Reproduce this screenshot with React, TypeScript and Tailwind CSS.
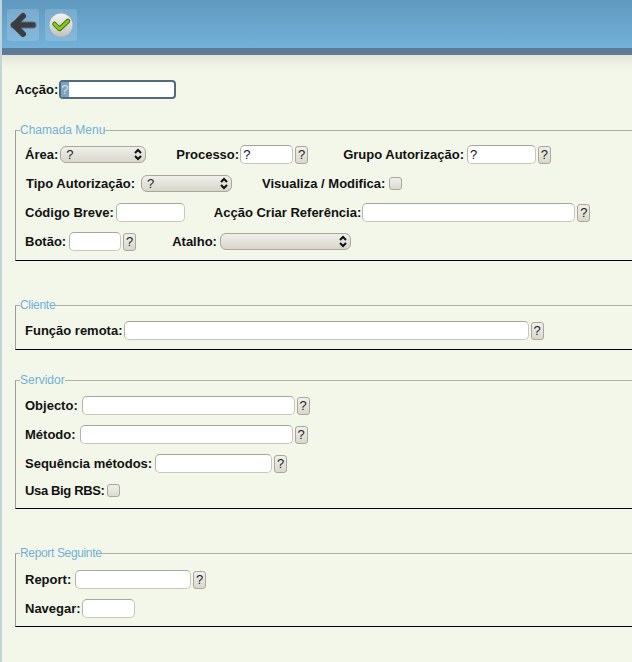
import React from "react";

const Label = ({ t, className = "mr-[2px]" }: { t: string; className?: string }) => (
  <span className={"font-bold text-[13px] text-[#111] whitespace-nowrap " + className}>{t}</span>
);
const Input = ({ w, v = "" }: { w: string; v?: string }) => (
  <div className={"h-[19px] bg-white rounded-[5px] border border-[#c9c8b8] border-t-[#a8a694] border-l-[#b5b3a2] text-[13px] leading-[17px] pl-[2px] text-[#111] " + w}>{v}</div>
);
const Help = () => (
  <div className="ml-[2px] w-[13px] h-[18px] rounded-[3px] border border-[#a9a89a] bg-gradient-to-b from-[#f0efea] to-[#d9d8cf] text-[13px] leading-[16px] text-center text-[#222]">?</div>
);
const Select = ({ w, v = "" }: { w: string; v?: string }) => (
  <div className={"h-[17px] rounded-[6px] border border-[#a9a89a] bg-gradient-to-b from-[#f0efe9] to-[#d8d7cd] flex items-center justify-between pl-[5px] pr-[2px] text-[13px] text-[#222] " + w}>
    <span>{v}</span>
    <svg width="10" height="13" viewBox="0 0 10 13" fill="none" stroke="#111" strokeWidth="2">
      <path d="M2 5 L5 2 L8 5" />
      <path d="M2 8 L5 11 L8 8" />
    </svg>
  </div>
);
const Check = () => (
  <div className="w-[13px] h-[13px] rounded-[3px] border border-[#a9a89a] bg-gradient-to-b from-[#f0efea] to-[#dcdbd2]" />
);
const Row = ({ children, className = "" }: { children: React.ReactNode; className?: string }) => (
  <div className={"flex items-center h-[29px] whitespace-nowrap " + className}>{children}</div>
);
const Box = ({ title, children, className = "", legend = "" }: { title: string; children: React.ReactNode; className?: string; legend?: string }) => (
  <fieldset className={"block ml-[13px] mr-[-20px] border-l border-t border-b border-r-0 border-l-[#9d9f94] border-t-[#aeb0a5] border-b-black pl-[9px] " + className}>
    <legend className={"ml-[-5px] p-0 text-[12px] leading-[14px] text-[#72b0d8] " + legend}>{title}</legend>
    {children}
  </fieldset>
);

export default function App() {
  return (
    <div className="w-[632px] h-[662px] overflow-hidden bg-[#f3f7e9] font-['Liberation_Sans',Arial,sans-serif] border-l-2 border-l-[#c3d3dc] box-border">
      <div className="-ml-[2px] h-[48px] bg-gradient-to-b from-[#6098bf] to-[#72b1d9] flex items-start gap-[6px] pl-[7px] pt-[9px]">
        <div className="w-[32px] h-[32px] rounded-[3px] bg-white/15">
          <svg width="32" height="32" viewBox="0 0 32 32">
            <path d="M7 16 H26" fill="none" stroke="#5f6f7c" strokeWidth="7" strokeLinecap="round" />
            <path d="M16 7 L7 16 L16 25" fill="none" stroke="#3a3d42" strokeWidth="6" strokeLinecap="round" strokeLinejoin="round" />
            <path d="M8 16 H26" fill="none" stroke="#3a3d42" strokeWidth="5" strokeLinecap="round" />
          </svg>
        </div>
        <div className="w-[32px] h-[32px] rounded-[3px] bg-white/15 flex items-center justify-center">
          <svg width="26" height="26" viewBox="0 0 26 26">
            <defs>
              <linearGradient id="g" x1="0" y1="0" x2="0" y2="1">
                <stop offset="0" stopColor="#f4f4f0" />
                <stop offset="1" stopColor="#c4c2bc" />
              </linearGradient>
            </defs>
            <circle cx="13" cy="13" r="11.5" fill="url(#g)" />
            <path d="M6.5 12 L11.5 17 L20 9" fill="none" stroke="#3f6a10" strokeWidth="4.5" strokeLinecap="round" strokeLinejoin="round" />
            <path d="M6.5 12 L11.5 17 L20 9" fill="none" stroke="#86cc1c" strokeWidth="2.6" strokeLinecap="round" strokeLinejoin="round" />
          </svg>
        </div>
      </div>
      <div className="-ml-[2px] h-[7px] bg-[#5b7b97]" />
      <div className="-ml-[2px] h-[14px] bg-gradient-to-b from-[#e3e5d6] to-[#f3f7e9]" />

      <div className="flex items-center h-[19px] mt-[11px] ml-[13px]">
        <Label t="Acção:" className="mr-[1px]" />
        <div className="w-[117px] h-[19px] bg-white rounded-[4px] border-2 border-[#4f6b7d] text-[13px] leading-[15px] text-[#d8e4ee]">
          <span className="bg-[#7ba3c4] inline-block h-[15px] leading-[15px] px-0">?</span>
        </div>
      </div>

      <Box title="Chamada Menu" className="mt-[24px] h-[138px]">
        <Row className="mt-[3px]">
          <Label t="Área:" />
          <Select w="w-[86px]" v="?" />
          <Label t="Processo:" className="ml-[30px] mr-[1px]" />
          <Input w="w-[53px]" v="?" />
          <Help />
          <Label t="Grupo Autorização:" className="ml-[35px] mr-[3px]" />
          <Input w="w-[69px]" v="?" />
          <Help />
        </Row>
        <Row>
          <Label t="Tipo Autorização:" className="ml-[1px] mr-[6px]" />
          <Select w="w-[91px]" v="?" />
          <Label t="Visualiza / Modifica:" className="ml-[30px] mr-[4px]" />
          <Check />
        </Row>
        <Row>
          <Label t="Código Breve:" />
          <Input w="w-[69px]" />
          <Label t="Acção Criar Referência:" className="ml-[29px] mr-[1px]" />
          <Input w="w-[213px]" />
          <Help />
        </Row>
        <Row>
          <Label t="Botão:" className="mr-[3px]" />
          <Input w="w-[52px]" />
          <Help />
          <Label t="Atalho:" className="ml-[36px] mr-[3px]" />
          <Select w="w-[131px]" />
        </Row>
      </Box>

      <Box title="Cliente" className="mt-[37px] h-[52px]" legend="tracking-[-0.3px]">
        <Row className="mt-[4px]">
          <Label t="Função remota:" className="mr-[1px]" />
          <Input w="w-[405px]" />
          <Help />
        </Row>
      </Box>

      <Box title="Servidor" className="mt-[23px] h-[136px]">
        <Row className="mt-[4px]">
          <Label t="Objecto:" className="mr-[4px]" />
          <Input w="w-[213px]" />
          <Help />
        </Row>
        <Row>
          <Label t="Método:" className="mr-[4px]" />
          <Input w="w-[213px]" />
          <Help />
        </Row>
        <Row>
          <Label t="Sequência métodos:" className="mr-[3px]" />
          <Input w="w-[117px]" />
          <Help />
        </Row>
        <Row className="-mt-[2px]">
          <Label t="Usa Big RBS:" className="tracking-[-0.35px] mr-[2px]" />
          <Check />
        </Row>
      </Box>

      <Box title="Report Seguinte" className="mt-[37px] h-[81px]" legend="tracking-[-0.35px]">
        <Row className="mt-[5px]">
          <Label t="Report:" className="mr-[4px]" />
          <Input w="w-[116px]" />
          <Help />
        </Row>
        <Row>
          <Label t="Navegar:" className="mr-[1px]" />
          <Input w="w-[53px]" />
        </Row>
      </Box>
    </div>
  );
}
